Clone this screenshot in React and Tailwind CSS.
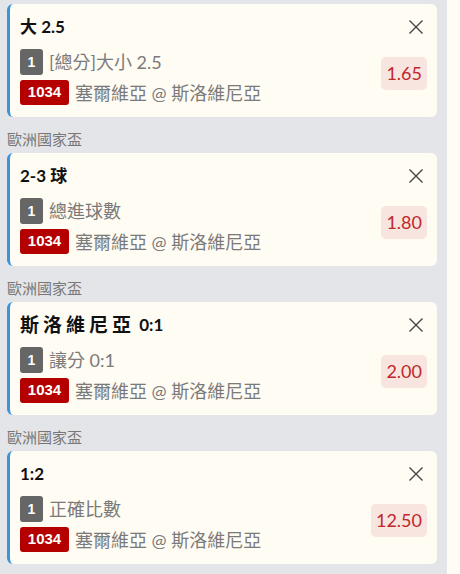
import React from 'react';

const bets = [
  { title: '大 2.5', market: '[總分]大小 2.5', odds: '1.65' },
  { title: '2-3 球', market: '總進球數', odds: '1.80' },
  { titleWide: '斯洛維尼亞', title: ' 0:1', market: '讓分 0:1', odds: '2.00' },
  { title: '1:2', market: '正確比數', odds: '12.50' },
];

const font = { fontFamily: 'Lato, "Noto Sans CJK TC", sans-serif' };

function CloseIcon() {
  return (
    <svg width="16" height="16" viewBox="0 0 16 16" className="text-[#444]">
      <path d="M1.5 1.5 L14.5 14.5 M14.5 1.5 L1.5 14.5" stroke="currentColor" strokeWidth="1.4" fill="none" />
    </svg>
  );
}

function BetCard({ bet }) {
  return (
    <div className="rounded-md border-l-[3px] border-[#3a94da] bg-[#fffcf3] pl-[10px] pr-[10px] pt-[12px] pb-[12px]">
      <div className="flex h-[22px] items-center justify-between">
        <div className="flex items-center whitespace-pre text-[17px] font-bold leading-[22px] text-[#111]">
          {bet.titleWide && <span className="text-[19px] tracking-[4px]">{bet.titleWide}</span>}
          {bet.title}
        </div>
        <div className="mr-[3px]">
          <CloseIcon />
        </div>
      </div>
      <div className="mt-[11px] flex items-center justify-between">
        <div className="flex flex-col gap-[5px]">
          <div className="flex items-center gap-[6px]">
            <span
              className="flex h-[26px] w-[23px] items-center justify-center rounded-[3px] bg-[#666] text-[14px] font-bold text-white"
              style={{ fontFamily: '"Liberation Sans", sans-serif' }}
            >
              1
            </span>
            <span className="text-[18px] leading-[22px] text-[#7a7a7a]">{bet.market}</span>
          </div>
          <div className="flex items-center gap-[6px]">
            <span
              className="flex h-[25px] w-[49px] items-center justify-center rounded-[3px] bg-[#b50000] text-[15px] font-bold text-white"
              style={{ fontFamily: '"Liberation Sans", sans-serif' }}
            >
              1034
            </span>
            <span className="text-[18px] leading-[22px] text-[#7a7a7a]">塞爾維亞 @ 斯洛維尼亞</span>
          </div>
        </div>
        <div className="mb-[7px] flex h-[33px] items-center rounded-[5px] bg-[#f8e5df] px-[5px] text-[18px] text-[#c0272d]">
          {bet.odds}
        </div>
      </div>
    </div>
  );
}

export default function App() {
  return (
    <div className="flex h-[574px] w-[460px] bg-[#fffcf4]" style={font}>
      <div className="h-full w-[447px] bg-[#e4e5e8] pl-[7px] pr-[10px] pt-[4px]">
        {bets.map((bet, i) => (
          <div key={i}>
            {i > 0 && (
              <div className="mt-[12px] mb-[4px] h-[20px] text-[15px] leading-[20px] text-[#777]">歐洲國家盃</div>
            )}
            <BetCard bet={bet} />
          </div>
        ))}
      </div>
    </div>
  );
}
